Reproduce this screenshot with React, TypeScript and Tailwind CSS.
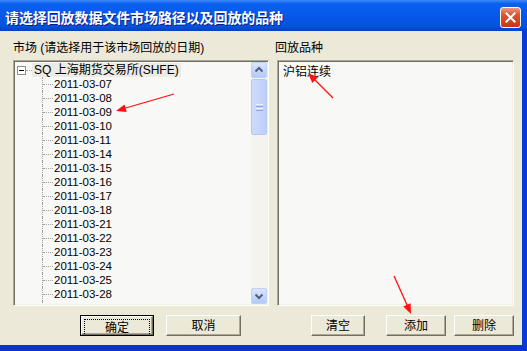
const dates = [
  "2011-03-07",
  "2011-03-08",
  "2011-03-09",
  "2011-03-10",
  "2011-03-11",
  "2011-03-14",
  "2011-03-15",
  "2011-03-16",
  "2011-03-17",
  "2011-03-18",
  "2011-03-21",
  "2011-03-22",
  "2011-03-23",
  "2011-03-24",
  "2011-03-25",
  "2011-03-28",
  "2011-03-29",
];

const sunken =
  "border border-t-[#aca899] border-l-[#aca899] border-b-white border-r-white shadow-[inset_1px_1px_0_#716f64,inset_-1px_-1px_0_#f1efe2]";

function XpButton({ label, width, isDefault }: { label: string; width: string; isDefault?: boolean }) {
  return (
    <div
      className={`${width} h-[21px] ${
        isDefault ? "border border-black" : ""
      } bg-[#ece9d8]`}
    >
      <div className="h-full w-full border border-t-white border-l-white border-b-[#716f64] border-r-[#716f64] shadow-[inset_-1px_-1px_0_#aca899]">
        <div
          className={`flex h-full items-center justify-center ${
            isDefault ? "m-[2px] h-[calc(100%-4px)] border border-dotted border-black" : ""
          }`}
        >
          {label}
        </div>
      </div>
    </div>
  );
}

function ScrollButton({ down }: { down?: boolean }) {
  return (
    <div className="flex h-[16px] items-center justify-center rounded-[2px] border border-[#bcd0f9] bg-[linear-gradient(to_bottom,#dbe6fd,#c2d4fb_60%,#b5c9f5)]">
      <svg width="10" height="8" viewBox="0 0 10 8">
        <polyline
          points={down ? "1.5,2.5 5,6 8.5,2.5" : "1.5,5.5 5,2 8.5,5.5"}
          fill="none"
          stroke="#4d6185"
          strokeWidth="2"
        />
      </svg>
    </div>
  );
}

export default function App() {
  return (
    <div
      className="relative h-[351px] w-[527px] overflow-hidden bg-[#ece9d8] text-[12px] text-black"
      style={{ fontFamily: '"Liberation Sans", "Noto Sans CJK SC", sans-serif' }}
    >
      {/* Title bar */}
      <div className="flex h-[31px] items-start justify-between bg-[linear-gradient(to_bottom,#3d8af7_0%,#0a61ef_12%,#0658e8_50%,#0552e0_85%,#0340c4_100%)] pl-[5px] pr-[6px]">
        <span
          className="mt-[7px] text-[14px] font-bold leading-[20px] tracking-[-0.1px] text-white [text-shadow:1px_1px_0_#0a1e87]"
          style={{ fontFamily: '"Noto Sans CJK SC", sans-serif' }}
        >
          请选择回放数据文件市场路径以及回放的品种
        </span>
        <div className="mt-[7px] flex h-[21px] w-[21px] items-center justify-center rounded-[3px] border border-white bg-[linear-gradient(to_bottom,#eb9a7f,#dc5533_35%,#cf3f1b_80%,#c0391c)]">
          <svg width="11" height="11" viewBox="0 0 11 11">
            <path d="M1.5 1.5 L9.5 9.5 M9.5 1.5 L1.5 9.5" stroke="white" strokeWidth="2" strokeLinecap="square" />
          </svg>
        </div>
      </div>

      {/* Body with frame */}
      <div className="h-[320px] border-b-[6px] border-r-[5px] border-b-[#0a33cf] border-r-[#0a3ad6] pl-[13px] pr-[8px] pt-[10px]">
        <div className="grid grid-cols-[256px_237px] gap-x-[8px]">
          <div className="h-[14px] leading-[14px]">市场 (请选择用于该市场回放的日期)</div>
          <div className="-ml-[2px] h-[14px] leading-[14px]">回放品种</div>

          {/* Tree box */}
          <div className={`mt-[5px] flex h-[246px] bg-[#f8f8f6] p-[1px] ${sunken}`}>
            <div className="flex-1 overflow-hidden pt-[1px]">
              <div className="flex h-[14px] items-center">
                <div className="ml-[2px] flex h-[9px] w-[9px] items-center justify-center border border-[#8e8f8f] bg-white">
                  <div className="h-px w-[5px] bg-black" />
                </div>
                <div className="w-[6px] border-t border-dotted border-[#a0a0a0]" />
                <span className="h-[14px] bg-[#ecebe4] px-[2px] leading-[14px]">SQ 上海期货交易所(SHFE)</span>
              </div>
              {dates.map((d) => (
                <div key={d} className="flex h-[14px] items-center">
                  <div className="w-[27px]" />
                  <div className="flex h-full w-[11px] items-center border-l border-dotted border-[#a0a0a0]">
                    <div className="w-full border-t border-dotted border-[#a0a0a0]" />
                  </div>
                  <span className="pl-px text-[11.5px] leading-[14px]">{d}</span>
                </div>
              ))}
            </div>
            <div className="flex w-[16px] flex-col bg-[#f4f3ee]">
              <ScrollButton />
              <div className="mt-px flex h-[56px] items-center justify-center rounded-[2px] border border-[#b4c8f6] bg-[linear-gradient(to_right,#cddafd,#c6d6fc_50%,#bccff9)]">
                <div className="flex flex-col gap-[1px]">
                  <div className="h-px w-[7px] bg-[#eef3fe]" />
                  <div className="h-px w-[7px] bg-[#8ca5dc]" />
                  <div className="h-px w-[7px] bg-[#eef3fe]" />
                  <div className="h-px w-[7px] bg-[#8ca5dc]" />
                </div>
              </div>
              <div className="flex-1" />
              <ScrollButton down />
            </div>
          </div>

          {/* Variety list */}
          <div className={`mt-[5px] h-[246px] bg-[#f8f8f6] p-[2px] ${sunken}`}>
            <div className="ml-[1px] inline-block h-[14px] px-[2px] leading-[14px]">沪铝连续</div>
          </div>

          {/* Buttons */}
          <div className="mt-[9px] flex pl-[67px]">
            <XpButton label="确定" width="w-[74px]" isDefault />
            <div className="w-[12px]" />
            <XpButton label="取消" width="w-[75px]" />
          </div>
          <div className="mt-[9px] flex pl-[34px]">
            <XpButton label="清空" width="w-[54px]" />
            <div className="w-[21px]" />
            <XpButton label="添加" width="w-[60px]" />
            <div className="w-[8px]" />
            <XpButton label="删除" width="w-[60px]" />
          </div>
        </div>
      </div>

      {/* Red annotation arrows */}
      <svg className="pointer-events-none absolute left-0 top-0" width="527" height="351">
        <g stroke="#ff1010" strokeWidth="1.3" fill="#ff1010">
          <line x1="174" y1="94" x2="124" y2="108.5" />
          <polygon points="116,111 126.7,112 124.5,104.4" stroke="none" />
          <line x1="333" y1="98" x2="314" y2="79" />
          <polygon points="308,73 317.9,77.3 312.3,82.9" stroke="none" />
          <line x1="394" y1="276" x2="407.5" y2="306" />
          <polygon points="411,314 403.3,306.5 410.6,303.3" stroke="none" />
        </g>
      </svg>
    </div>
  );
}
